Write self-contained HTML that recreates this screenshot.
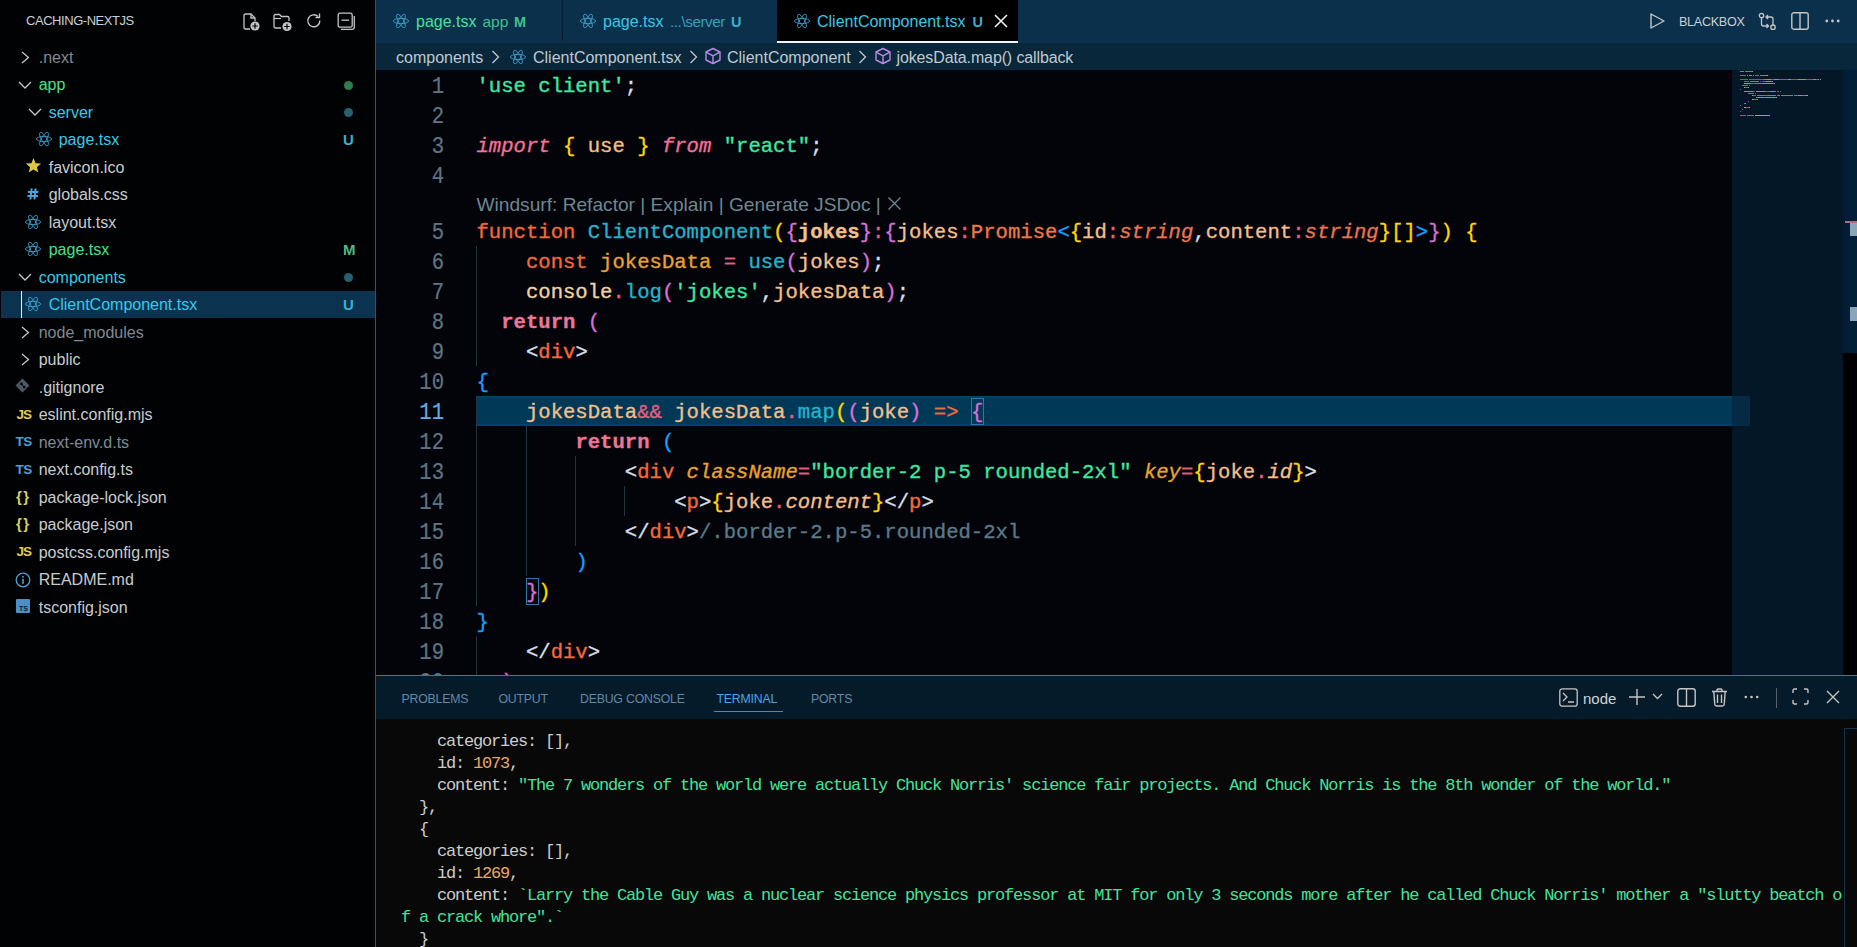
<!DOCTYPE html><html><head><meta charset="utf-8"><style>
*{margin:0;padding:0;box-sizing:border-box}
html,body{width:1857px;height:947px;overflow:hidden;background:#03030a;font-family:"Liberation Sans",sans-serif}
.abs{position:absolute}
.ic{position:absolute;overflow:visible}
.sl{position:absolute;height:27.5px;line-height:27.5px;font-size:16px;white-space:pre}
.gl{position:absolute;height:27.5px;line-height:27.5px;white-space:pre}
.tb{position:absolute;top:0;height:43px;line-height:44px;font-size:16px;white-space:pre}
.bc{position:absolute;top:44.3px;height:27px;line-height:27px;font-size:16px;white-space:pre}
.pt{position:absolute;top:676.8px;height:43px;line-height:44px;font-size:12.3px;letter-spacing:-0.2px;white-space:pre}
.cl{position:absolute;left:476.5px;height:30px;line-height:30px;font-family:"Liberation Mono",monospace;font-size:20.6px;white-space:pre;-webkit-text-stroke:0.35px currentColor}
.cl span{-webkit-text-stroke:0.35px}
.ln{position:absolute;left:391px;width:53px;transform:scaleY(1.14);transform-origin:0 21px;-webkit-text-stroke:0.2px currentColor;text-align:right;height:30px;line-height:30px;font-family:"Liberation Mono",monospace;font-size:20.6px}
.tl{position:absolute;left:401px;font-family:"Liberation Mono",monospace;font-size:17px;letter-spacing:-1.2px;line-height:22px;height:22px;white-space:pre;color:#cccccc}
</style></head><body><div class="abs" style="left:0;top:0;width:375px;height:947px;background:#010204"></div>
<div class="abs" style="left:375px;top:0;width:1px;height:947px;background:#4a4c50"></div>
<div class="abs" style="left:26px;top:0;height:43.75px;line-height:42px;font-size:13px;letter-spacing:-0.45px;color:#c9d1d9">CACHING-NEXTJS</div>
<div class="sl" style="left:38.7px;top:43.55px;color:#7f8a93">.next</div>
<svg class="ic" style="left:21px;top:50.5px" width="9" height="13" viewBox="0 0 9 13"><path d="M1 1 L7.5 6.5 L1 12" fill="none" stroke="#c8c8c8" stroke-width="1.3"/></svg>
<div class="sl" style="left:38.7px;top:71.05px;color:#48e08a">app</div>
<svg class="ic" style="left:18px;top:80.5px" width="14" height="8" viewBox="0 0 14 8"><path d="M1 1 L7 7 L13 1" fill="none" stroke="#c8c8c8" stroke-width="1.3"/></svg>
<div class="abs" style="left:344px;top:80.5px;width:9px;height:9px;border-radius:50%;background:#327a50"></div>
<div class="sl" style="left:48.7px;top:98.55px;color:#38c8e8">server</div>
<svg class="ic" style="left:28px;top:108.0px" width="14" height="8" viewBox="0 0 14 8"><path d="M1 1 L7 7 L13 1" fill="none" stroke="#c8c8c8" stroke-width="1.3"/></svg>
<div class="abs" style="left:344px;top:108.0px;width:9px;height:9px;border-radius:50%;background:#28606e"></div>
<div class="sl" style="left:58.7px;top:126.05px;color:#38c8e8">page.tsx</div>
<svg class="ic" style="left:36px;top:131.2px" width="16" height="16" viewBox="0 0 16 16"><g fill="none" stroke="#3fa2cf" stroke-width="0.85"><ellipse cx="8" cy="8" rx="7.6" ry="2.6"/><ellipse cx="8" cy="8" rx="7.6" ry="2.6" transform="rotate(60 8 8)"/><ellipse cx="8" cy="8" rx="7.6" ry="2.6" transform="rotate(120 8 8)"/></g></svg>
<div class="sl" style="left:343px;top:126.25px;color:#3aaed0;font-weight:bold;font-size:15px">U</div>
<div class="sl" style="left:48.7px;top:153.55px;color:#c8ccd0">favicon.ico</div>
<svg class="ic" style="left:25px;top:156.5px" width="17" height="17" viewBox="0 0 24 24"><path d="M12 1.5 L15 8.8 L22.8 9.3 L16.8 14.3 L18.8 22 L12 17.8 L5.2 22 L7.2 14.3 L1.2 9.3 L9 8.8 Z" fill="#dcc848"/></svg>
<div class="sl" style="left:48.7px;top:181.05px;color:#c8ccd0">globals.css</div>
<svg class="ic" style="left:27px;top:188.0px" width="12" height="12" viewBox="0 0 12 12"><path d="M4.6 0.5 L3.4 11.5 M8.6 0.5 L7.4 11.5 M0.8 3.9 H11.4 M0.4 8.1 H11" stroke="#4ea3d8" stroke-width="2"/></svg>
<div class="sl" style="left:48.7px;top:208.55px;color:#c8ccd0">layout.tsx</div>
<svg class="ic" style="left:25px;top:213.7px" width="16" height="16" viewBox="0 0 16 16"><g fill="none" stroke="#3fa2cf" stroke-width="0.85"><ellipse cx="8" cy="8" rx="7.6" ry="2.6"/><ellipse cx="8" cy="8" rx="7.6" ry="2.6" transform="rotate(60 8 8)"/><ellipse cx="8" cy="8" rx="7.6" ry="2.6" transform="rotate(120 8 8)"/></g></svg>
<div class="sl" style="left:48.7px;top:236.05px;color:#48e08a">page.tsx</div>
<svg class="ic" style="left:25px;top:241.2px" width="16" height="16" viewBox="0 0 16 16"><g fill="none" stroke="#3fa2cf" stroke-width="0.85"><ellipse cx="8" cy="8" rx="7.6" ry="2.6"/><ellipse cx="8" cy="8" rx="7.6" ry="2.6" transform="rotate(60 8 8)"/><ellipse cx="8" cy="8" rx="7.6" ry="2.6" transform="rotate(120 8 8)"/></g></svg>
<div class="sl" style="left:343px;top:236.25px;color:#4fb883;font-weight:bold;font-size:15px">M</div>
<div class="sl" style="left:38.7px;top:263.55px;color:#38c8e8">components</div>
<svg class="ic" style="left:18px;top:273.0px" width="14" height="8" viewBox="0 0 14 8"><path d="M1 1 L7 7 L13 1" fill="none" stroke="#c8c8c8" stroke-width="1.3"/></svg>
<div class="abs" style="left:344px;top:273.0px;width:9px;height:9px;border-radius:50%;background:#28606e"></div>
<div class="abs" style="left:1px;top:291.25px;width:374px;height:26.75px;background:#0b3350"></div>
<div class="abs" style="left:21px;top:291.25px;width:1.2px;height:26.75px;background:#e8eef2"></div>
<div class="sl" style="left:48.7px;top:291.05px;color:#38c8e8">ClientComponent.tsx</div>
<svg class="ic" style="left:25px;top:296.2px" width="16" height="16" viewBox="0 0 16 16"><g fill="none" stroke="#3fa2cf" stroke-width="0.85"><ellipse cx="8" cy="8" rx="7.6" ry="2.6"/><ellipse cx="8" cy="8" rx="7.6" ry="2.6" transform="rotate(60 8 8)"/><ellipse cx="8" cy="8" rx="7.6" ry="2.6" transform="rotate(120 8 8)"/></g></svg>
<div class="sl" style="left:343px;top:291.25px;color:#3aaed0;font-weight:bold;font-size:15px">U</div>
<div class="sl" style="left:38.7px;top:318.55px;color:#7f8a93">node_modules</div>
<svg class="ic" style="left:21px;top:325.5px" width="9" height="13" viewBox="0 0 9 13"><path d="M1 1 L7.5 6.5 L1 12" fill="none" stroke="#c8c8c8" stroke-width="1.3"/></svg>
<div class="sl" style="left:38.7px;top:346.05px;color:#c8ccd0">public</div>
<svg class="ic" style="left:21px;top:353.0px" width="9" height="13" viewBox="0 0 9 13"><path d="M1 1 L7.5 6.5 L1 12" fill="none" stroke="#c8c8c8" stroke-width="1.3"/></svg>
<div class="sl" style="left:38.7px;top:373.55px;color:#c8ccd0">.gitignore</div>
<svg class="ic" style="left:15px;top:378.0px" width="15" height="15" viewBox="0 0 14 14"><path d="M7 0.5 L13.5 7 L7 13.5 L0.5 7 Z" fill="#4d5862"/><circle cx="6" cy="5.5" r="1.2" fill="#000"/><circle cx="8.5" cy="8.5" r="1.2" fill="#000"/><path d="M6 5.5 L8.5 8.5" stroke="#000" stroke-width="0.9"/></svg>
<div class="sl" style="left:38.7px;top:401.05px;color:#c8ccd0">eslint.config.mjs</div>
<div class="gl" style="left:16.5px;top:400.75px;color:#e5cd52;font-weight:bold;font-size:13.5px;letter-spacing:-1px">JS</div>
<div class="sl" style="left:38.7px;top:428.55px;color:#7f8a93">next-env.d.ts</div>
<div class="gl" style="left:15.5px;top:428.25px;color:#4e9fd6;font-weight:bold;font-size:13.5px;letter-spacing:-0.6px">TS</div>
<div class="sl" style="left:38.7px;top:456.05px;color:#c8ccd0">next.config.ts</div>
<div class="gl" style="left:15.5px;top:455.75px;color:#4e9fd6;font-weight:bold;font-size:13.5px;letter-spacing:-0.6px">TS</div>
<div class="sl" style="left:38.7px;top:483.55px;color:#c8ccd0">package-lock.json</div>
<div class="gl" style="left:16px;top:482.75px;color:#d7d05a;font-weight:bold;font-size:15px;letter-spacing:1.5px">{}</div>
<div class="sl" style="left:38.7px;top:511.05px;color:#c8ccd0">package.json</div>
<div class="gl" style="left:16px;top:510.25px;color:#d7d05a;font-weight:bold;font-size:15px;letter-spacing:1.5px">{}</div>
<div class="sl" style="left:38.7px;top:538.55px;color:#c8ccd0">postcss.config.mjs</div>
<div class="gl" style="left:16.5px;top:538.25px;color:#e5cd52;font-weight:bold;font-size:13.5px;letter-spacing:-1px">JS</div>
<div class="sl" style="left:38.7px;top:566.05px;color:#c8ccd0">README.md</div>
<svg class="ic" style="left:15px;top:572.0px" width="16" height="16" viewBox="0 0 16 16"><circle cx="8" cy="8" r="6.8" fill="none" stroke="#4fa0d0" stroke-width="1.3"/><rect x="7.2" y="6.8" width="1.6" height="5" fill="#4fa0d0"/><rect x="7.2" y="4" width="1.6" height="1.6" fill="#4fa0d0"/></svg>
<div class="sl" style="left:38.7px;top:593.55px;color:#c8ccd0">tsconfig.json</div>
<svg class="ic" style="left:16px;top:598.5px" width="14" height="14" viewBox="0 0 14 14"><rect x="0" y="0" width="14" height="14" rx="1" fill="#4a90c8"/><text x="7.5" y="11.5" font-size="7" font-family="Liberation Sans" font-weight="bold" fill="#0a1a28" text-anchor="middle">TS</text></svg>
<svg class="ic" style="left:241px;top:12px" width="20" height="20" viewBox="0 0 20 20"><path d="M9 17 H4.5 Q3 17 3 15.5 V3.5 Q3 2 4.5 2 H10 L14 6 V9" fill="none" stroke="#c5c5c5" stroke-width="1.3"/><path d="M10 2 V6 H14" fill="none" stroke="#c5c5c5" stroke-width="1.3"/><circle cx="14" cy="14" r="4.6" fill="#c5c5c5"/><path d="M14 11.3 V16.7 M11.3 14 H16.7" stroke="#000" stroke-width="1.2"/></svg>
<svg class="ic" style="left:272px;top:12px" width="21" height="20" viewBox="0 0 21 20"><path d="M9 16 H3.5 Q2 16 2 14.5 V4 Q2 2.5 3.5 2.5 H7.5 L9.5 4.5 H15.5 Q17 4.5 17 6 V9" fill="none" stroke="#c5c5c5" stroke-width="1.3"/><path d="M2 6.5 H9" fill="none" stroke="#c5c5c5" stroke-width="1.2"/><circle cx="15" cy="14.5" r="4.6" fill="#c5c5c5"/><path d="M15 11.8 V17.2 M12.3 14.5 H17.7" stroke="#000" stroke-width="1.2"/></svg>
<svg class="ic" style="left:305px;top:12px" width="18" height="18" viewBox="0 0 18 18"><path d="M14.8 8.5 A6 6 0 1 1 13 4.5" fill="none" stroke="#c5c5c5" stroke-width="1.4"/><path d="M14.5 1.5 V5.5 H10.5" fill="none" stroke="#c5c5c5" stroke-width="1.4"/></svg>
<svg class="ic" style="left:337px;top:12px" width="19" height="19" viewBox="0 0 19 19"><rect x="1.2" y="1.2" width="14" height="14" rx="1.8" fill="none" stroke="#c5c5c5" stroke-width="1.3"/><path d="M4.5 8.2 H12" stroke="#c5c5c5" stroke-width="1.3"/><path d="M17.3 4 V15.5 Q17.3 17.3 15.5 17.3 H4" fill="none" stroke="#c5c5c5" stroke-width="1.3"/></svg>
<div class="abs" style="left:376px;top:0;width:1481px;height:43px;background:#0b304b"></div>
<div class="abs" style="left:562px;top:0;width:1px;height:41px;background:#061a2a"></div>
<div class="abs" style="left:777px;top:0;width:241px;height:43px;background:#000"></div>
<div class="abs" style="left:777px;top:41px;width:241px;height:2px;background:#f2f4f6"></div>
<svg class="ic" style="left:393px;top:13px" width="16" height="16" viewBox="0 0 16 16"><g fill="none" stroke="#3fa2cf" stroke-width="0.85"><ellipse cx="8" cy="8" rx="7.6" ry="2.6"/><ellipse cx="8" cy="8" rx="7.6" ry="2.6" transform="rotate(60 8 8)"/><ellipse cx="8" cy="8" rx="7.6" ry="2.6" transform="rotate(120 8 8)"/></g></svg>
<div class="tb" style="left:416px;color:#46e29a">page.tsx</div>
<div class="tb" style="left:482.5px;color:#40c090;font-size:15.5px">app</div>
<div class="tb" style="left:514px;color:#40c090;font-weight:bold;font-size:14.5px">M</div>
<svg class="ic" style="left:580px;top:13px" width="16" height="16" viewBox="0 0 16 16"><g fill="none" stroke="#3fa2cf" stroke-width="0.85"><ellipse cx="8" cy="8" rx="7.6" ry="2.6"/><ellipse cx="8" cy="8" rx="7.6" ry="2.6" transform="rotate(60 8 8)"/><ellipse cx="8" cy="8" rx="7.6" ry="2.6" transform="rotate(120 8 8)"/></g></svg>
<div class="tb" style="left:603px;color:#38c8e8">page.tsx</div>
<div class="tb" style="left:670px;color:#3a9fb8;font-size:15.3px;letter-spacing:-0.45px">...\server</div>
<div class="tb" style="left:731px;color:#3aaed0;font-weight:bold;font-size:14.5px">U</div>
<svg class="ic" style="left:794px;top:13px" width="16" height="16" viewBox="0 0 16 16"><g fill="none" stroke="#3fa2cf" stroke-width="0.85"><ellipse cx="8" cy="8" rx="7.6" ry="2.6"/><ellipse cx="8" cy="8" rx="7.6" ry="2.6" transform="rotate(60 8 8)"/><ellipse cx="8" cy="8" rx="7.6" ry="2.6" transform="rotate(120 8 8)"/></g></svg>
<div class="tb" style="left:817px;color:#38c8e8">ClientComponent.tsx</div>
<div class="tb" style="left:972.5px;color:#3aaed0;font-weight:bold;font-size:14.5px">U</div>
<svg class="ic" style="left:994px;top:14px" width="14" height="14" viewBox="0 0 14 14"><path d="M1 1 L13 13 M13 1 L1 13" stroke="#f0f0f0" stroke-width="1.6"/></svg>
<svg class="ic" style="left:1649px;top:12px" width="17" height="18" viewBox="0 0 17 18"><path d="M2 2 L15 9 L2 16 Z" fill="none" stroke="#c5c5c5" stroke-width="1.4" stroke-linejoin="round"/></svg>
<div class="tb" style="left:1679px;color:#c9d1d9;font-size:12.6px;letter-spacing:-0.3px">BLACKBOX</div>
<svg class="ic" style="left:1758px;top:12px" width="19" height="19" viewBox="0 0 19 19"><circle cx="3.5" cy="3.5" r="2.2" fill="none" stroke="#c5c5c5" stroke-width="1.3"/><circle cx="15" cy="15.2" r="2.2" fill="none" stroke="#c5c5c5" stroke-width="1.3"/><path d="M3.5 5.7 V12 Q3.5 14 5.5 14 H10.5 M8.5 12 L10.5 14 L8.5 16 M15 13 V7 Q15 5 13 5 H8 M10 3 L8 5 L10 7" fill="none" stroke="#c5c5c5" stroke-width="1.3"/></svg>
<svg class="ic" style="left:1791px;top:12px" width="18" height="18" viewBox="0 0 18 18"><rect x="0.8" y="0.8" width="16.4" height="16.4" rx="2" fill="none" stroke="#c5c5c5" stroke-width="1.4"/><path d="M9 1 V17" stroke="#c5c5c5" stroke-width="1.4"/></svg>
<svg class="ic" style="left:1825px;top:19px" width="15" height="4" viewBox="0 0 15 4"><circle cx="1.8" cy="2" r="1.4" fill="#c5c5c5"/><circle cx="7.5" cy="2" r="1.4" fill="#c5c5c5"/><circle cx="13.2" cy="2" r="1.4" fill="#c5c5c5"/></svg>
<div class="abs" style="left:376px;top:43px;width:1481px;height:27px;background:#08273a"></div>
<div class="bc" style="left:396px;color:#c0c8d0">components</div>
<svg class="ic" style="left:491px;top:50px" width="9" height="14" viewBox="0 0 9 14"><path d="M1.5 1 L7.5 7.0 L1.5 13" fill="none" stroke="#c0c8d0" stroke-width="1.3"/></svg>
<svg class="ic" style="left:510px;top:49px" width="16" height="16" viewBox="0 0 16 16"><g fill="none" stroke="#3fa2cf" stroke-width="0.85"><ellipse cx="8" cy="8" rx="7.6" ry="2.6"/><ellipse cx="8" cy="8" rx="7.6" ry="2.6" transform="rotate(60 8 8)"/><ellipse cx="8" cy="8" rx="7.6" ry="2.6" transform="rotate(120 8 8)"/></g></svg>
<div class="bc" style="left:533px;color:#c0c8d0">ClientComponent.tsx</div>
<svg class="ic" style="left:689px;top:50px" width="9" height="14" viewBox="0 0 9 14"><path d="M1.5 1 L7.5 7.0 L1.5 13" fill="none" stroke="#c0c8d0" stroke-width="1.3"/></svg>
<svg class="ic" style="left:704px;top:47px" width="18" height="18" viewBox="0 0 18 18"><g fill="none" stroke="#b88ae6" stroke-width="1.4" stroke-linejoin="round"><path d="M9 1.5 L16 5 L16 13 L9 16.5 L2 13 L2 5 Z"/><path d="M2.5 5.3 L9 8.8 L15.5 5.3 M9 8.8 L9 16"/></g></svg>
<div class="bc" style="left:727px;color:#c0c8d0">ClientComponent</div>
<svg class="ic" style="left:858px;top:50px" width="9" height="14" viewBox="0 0 9 14"><path d="M1.5 1 L7.5 7.0 L1.5 13" fill="none" stroke="#c0c8d0" stroke-width="1.3"/></svg>
<svg class="ic" style="left:874px;top:47px" width="18" height="18" viewBox="0 0 18 18"><g fill="none" stroke="#b88ae6" stroke-width="1.4" stroke-linejoin="round"><path d="M9 1.5 L16 5 L16 13 L9 16.5 L2 13 L2 5 Z"/><path d="M2.5 5.3 L9 8.8 L15.5 5.3 M9 8.8 L9 16"/></g></svg>
<div class="bc" style="left:896.5px;color:#c0c8d0;letter-spacing:-0.12px">jokesData.map() callback</div>
<div class="abs" style="left:476px;top:396px;width:1274px;height:30px;background:#003858;border-top:2px solid #00426a;border-bottom:2px solid #00426a"></div>
<div class="cl" style="top:72px"><span style="color:#3ee8a0">&#x27;use client&#x27;</span><span style="color:#d5dde6">;</span></div>
<div class="ln" style="top:72.6px;color:#5f7584">1</div>
<div class="cl" style="top:102px"></div>
<div class="ln" style="top:102.6px;color:#5f7584">2</div>
<div class="cl" style="top:132px"><span style="color:#f27196;font-style:italic">import</span><span style="color: "> </span><span style="color:#ffd700">{</span><span style="color:#f2bf8a"> use </span><span style="color:#ffd700">}</span><span style="color: "> </span><span style="color:#f27196;font-style:italic">from</span><span style="color: "> </span><span style="color:#3ee8a0">&quot;react&quot;</span><span style="color:#d5dde6">;</span></div>
<div class="ln" style="top:132.6px;color:#5f7584">3</div>
<div class="cl" style="top:162px"></div>
<div class="ln" style="top:162.6px;color:#5f7584">4</div>
<div class="cl" style="top:218px"><span style="color:#f5693a">function</span><span style="color: "> </span><span style="color:#24b4cc">ClientComponent</span><span style="color:#ffd700">(</span><span style="color:#da70d6">{</span><span style="color:#f2bf8a;font-weight:bold">jokes</span><span style="color:#da70d6">}</span><span style="color:#e2607e">:</span><span style="color:#da70d6">{</span><span style="color:#f2bf8a">jokes</span><span style="color:#e2607e">:</span><span style="color:#ee7a45">Promise</span><span style="color:#179fff">&lt;</span><span style="color:#ffd700">{</span><span style="color:#f2bf8a">id</span><span style="color:#e2607e">:</span><span style="color:#e8744e;font-style:italic">string</span><span style="color:#d5dde6">,</span><span style="color:#f2bf8a">content</span><span style="color:#e2607e">:</span><span style="color:#e8744e;font-style:italic">string</span><span style="color:#ffd700">}</span><span style="color:#ffd700">[]</span><span style="color:#179fff">&gt;</span><span style="color:#da70d6">}</span><span style="color:#ffd700">)</span><span style="color: "> </span><span style="color:#ffd700">{</span></div>
<div class="ln" style="top:218.6px;color:#5f7584">5</div>
<div class="cl" style="top:248px"><span style="color: ">    </span><span style="color:#f5693a">const</span><span style="color: "> </span><span style="color:#e9a233">jokesData</span><span style="color: "> </span><span style="color:#e2607e">=</span><span style="color: "> </span><span style="color:#24b4cc">use</span><span style="color:#da70d6">(</span><span style="color:#f2bf8a">jokes</span><span style="color:#da70d6">)</span><span style="color:#d5dde6">;</span></div>
<div class="ln" style="top:248.6px;color:#5f7584">6</div>
<div class="cl" style="top:278px"><span style="color: ">    </span><span style="color:#f2d2a2">console</span><span style="color:#e2607e">.</span><span style="color:#24b4cc">log</span><span style="color:#da70d6">(</span><span style="color:#3ee8a0">&#x27;jokes&#x27;</span><span style="color:#d5dde6">,</span><span style="color:#f2bf8a">jokesData</span><span style="color:#da70d6">)</span><span style="color:#d5dde6">;</span></div>
<div class="ln" style="top:278.6px;color:#5f7584">7</div>
<div class="cl" style="top:308px"><span style="color: ">  </span><span style="color:#ec7595;font-weight:bold">return</span><span style="color: "> </span><span style="color:#da70d6">(</span></div>
<div class="ln" style="top:308.6px;color:#5f7584">8</div>
<div class="cl" style="top:338px"><span style="color: ">    </span><span style="color:#d8dfe6">&lt;</span><span style="color:#f5693a">div</span><span style="color:#d8dfe6">&gt;</span></div>
<div class="ln" style="top:338.6px;color:#5f7584">9</div>
<div class="cl" style="top:368px"><span style="color:#179fff">{</span></div>
<div class="ln" style="top:368.6px;color:#5f7584">10</div>
<div class="cl" style="top:398px"><span style="color: ">    </span><span style="color:#f2bf8a">jokesData</span><span style="color:#e2607e">&amp;&amp;</span><span style="color: "> </span><span style="color:#f2bf8a">jokesData</span><span style="color:#e2607e">.</span><span style="color:#24b4cc">map</span><span style="color:#ffd700">(</span><span style="color:#da70d6">(</span><span style="color:#f2bf8a">joke</span><span style="color:#da70d6">)</span><span style="color: "> </span><span style="color:#f5693a">=&gt;</span><span style="color: "> </span><span style="color:#da70d6">{</span></div>
<div class="ln" style="top:398.6px;color:#5aaee6">11</div>
<div class="cl" style="top:428px"><span style="color: ">        </span><span style="color:#ec7595;font-weight:bold">return</span><span style="color: "> </span><span style="color:#179fff">(</span></div>
<div class="ln" style="top:428.6px;color:#5f7584">12</div>
<div class="cl" style="top:458px"><span style="color: ">            </span><span style="color:#d8dfe6">&lt;</span><span style="color:#f5693a">div</span><span style="color: "> </span><span style="color:#e9a22f;font-style:italic">className</span><span style="color:#e2607e">=</span><span style="color:#3ee8a0">&quot;border-2 p-5 rounded-2xl&quot;</span><span style="color: "> </span><span style="color:#e9a22f;font-style:italic">key</span><span style="color:#e2607e">=</span><span style="color:#ffd700">{</span><span style="color:#f2bf8a">joke</span><span style="color:#e2607e">.</span><span style="color:#f2bf8a;font-style:italic">id</span><span style="color:#ffd700">}</span><span style="color:#d8dfe6">&gt;</span></div>
<div class="ln" style="top:458.6px;color:#5f7584">13</div>
<div class="cl" style="top:488px"><span style="color: ">                </span><span style="color:#d8dfe6">&lt;</span><span style="color:#f5693a">p</span><span style="color:#d8dfe6">&gt;</span><span style="color:#ffd700">{</span><span style="color:#f2bf8a">joke</span><span style="color:#e2607e">.</span><span style="color:#f2bf8a;font-style:italic">content</span><span style="color:#ffd700">}</span><span style="color:#d8dfe6">&lt;/</span><span style="color:#f5693a">p</span><span style="color:#d8dfe6">&gt;</span></div>
<div class="ln" style="top:488.6px;color:#5f7584">14</div>
<div class="cl" style="top:518px"><span style="color: ">            </span><span style="color:#d8dfe6">&lt;/</span><span style="color:#f5693a">div</span><span style="color:#d8dfe6">&gt;</span><span style="color:#5b7a88">/.border-2.p-5.rounded-2xl</span></div>
<div class="ln" style="top:518.6px;color:#5f7584">15</div>
<div class="cl" style="top:548px"><span style="color: ">        </span><span style="color:#179fff">)</span></div>
<div class="ln" style="top:548.6px;color:#5f7584">16</div>
<div class="cl" style="top:578px"><span style="color: ">    </span><span style="color:#da70d6">}</span><span style="color:#ffd700">)</span></div>
<div class="ln" style="top:578.6px;color:#5f7584">17</div>
<div class="cl" style="top:608px"><span style="color:#179fff">}</span></div>
<div class="ln" style="top:608.6px;color:#5f7584">18</div>
<div class="cl" style="top:638px"><span style="color: ">    </span><span style="color:#d8dfe6">&lt;/</span><span style="color:#f5693a">div</span><span style="color:#d8dfe6">&gt;</span></div>
<div class="ln" style="top:638.6px;color:#5f7584">19</div>
<div class="cl" style="top:668px"><span style="color: ">  </span><span style="color:#da70d6">)</span></div>
<div class="ln" style="top:668.6px;color:#5f7584">20</div>
<div class="abs" style="left:476.5px;top:191.5px;height:26px;line-height:26px;font-size:19.15px;color:#6f8791;white-space:pre">Windsurf: Refactor | Explain | Generate JSDoc |</div>
<svg class="ic" style="left:887px;top:196px" width="15" height="15" viewBox="0 0 15 15"><path d="M1.5 1.5 L13.5 13.5 M13.5 1.5 L1.5 13.5" stroke="#6f8791" stroke-width="1.3"/></svg>
<div class="abs" style="left:476px;top:246px;width:1px;height:120px;background:#1d3443"></div>
<div class="abs" style="left:476px;top:396px;width:1px;height:210px;background:#1d3443"></div>
<div class="abs" style="left:476px;top:636px;width:1px;height:39px;background:#1d3443"></div>
<div class="abs" style="left:526px;top:426px;width:1px;height:150px;background:#1d3443"></div>
<div class="abs" style="left:575px;top:456px;width:1px;height:90px;background:#1d3443"></div>
<div class="abs" style="left:624px;top:486px;width:1px;height:30px;background:#1d3443"></div>
<div class="abs" style="left:970.8px;top:398px;width:13.4px;height:27px;border:1px solid #2f77a5"></div>
<div class="abs" style="left:525.5px;top:578px;width:13.4px;height:27px;border:1px solid #2f77a5"></div>
<div class="abs" style="left:1732px;top:70px;width:111px;height:605px;background:#031726"></div>
<div class="abs" style="left:1740px;top:70.6px;width:4px;height:1.3px;background:#3ee8a0;opacity:0.7"></div>
<div class="abs" style="left:1745px;top:70.6px;width:7px;height:1.3px;background:#3ee8a0;opacity:0.7"></div>
<div class="abs" style="left:1752px;top:70.6px;width:1px;height:1.3px;background:#d5dde6;opacity:0.7"></div>
<div class="abs" style="left:1740px;top:74.6px;width:6px;height:1.3px;background:#f27196;opacity:0.7"></div>
<div class="abs" style="left:1747px;top:74.6px;width:1px;height:1.3px;background:#ffd700;opacity:0.7"></div>
<div class="abs" style="left:1749px;top:74.6px;width:3px;height:1.3px;background:#f2bf8a;opacity:0.7"></div>
<div class="abs" style="left:1753px;top:74.6px;width:1px;height:1.3px;background:#ffd700;opacity:0.7"></div>
<div class="abs" style="left:1755px;top:74.6px;width:4px;height:1.3px;background:#f27196;opacity:0.7"></div>
<div class="abs" style="left:1760px;top:74.6px;width:7px;height:1.3px;background:#3ee8a0;opacity:0.7"></div>
<div class="abs" style="left:1767px;top:74.6px;width:1px;height:1.3px;background:#d5dde6;opacity:0.7"></div>
<div class="abs" style="left:1740px;top:78.6px;width:8px;height:1.3px;background:#f5693a;opacity:0.7"></div>
<div class="abs" style="left:1749px;top:78.6px;width:15px;height:1.3px;background:#24b4cc;opacity:0.7"></div>
<div class="abs" style="left:1764px;top:78.6px;width:1px;height:1.3px;background:#ffd700;opacity:0.7"></div>
<div class="abs" style="left:1765px;top:78.6px;width:1px;height:1.3px;background:#da70d6;opacity:0.7"></div>
<div class="abs" style="left:1766px;top:78.6px;width:5px;height:1.3px;background:#f2bf8a;opacity:0.7"></div>
<div class="abs" style="left:1771px;top:78.6px;width:1px;height:1.3px;background:#da70d6;opacity:0.7"></div>
<div class="abs" style="left:1772px;top:78.6px;width:1px;height:1.3px;background:#e2607e;opacity:0.7"></div>
<div class="abs" style="left:1773px;top:78.6px;width:1px;height:1.3px;background:#da70d6;opacity:0.7"></div>
<div class="abs" style="left:1774px;top:78.6px;width:5px;height:1.3px;background:#f2bf8a;opacity:0.7"></div>
<div class="abs" style="left:1779px;top:78.6px;width:1px;height:1.3px;background:#e2607e;opacity:0.7"></div>
<div class="abs" style="left:1780px;top:78.6px;width:7px;height:1.3px;background:#ee7a45;opacity:0.7"></div>
<div class="abs" style="left:1787px;top:78.6px;width:1px;height:1.3px;background:#179fff;opacity:0.7"></div>
<div class="abs" style="left:1788px;top:78.6px;width:1px;height:1.3px;background:#ffd700;opacity:0.7"></div>
<div class="abs" style="left:1789px;top:78.6px;width:2px;height:1.3px;background:#f2bf8a;opacity:0.7"></div>
<div class="abs" style="left:1791px;top:78.6px;width:1px;height:1.3px;background:#e2607e;opacity:0.7"></div>
<div class="abs" style="left:1792px;top:78.6px;width:6px;height:1.3px;background:#e8744e;opacity:0.7"></div>
<div class="abs" style="left:1798px;top:78.6px;width:1px;height:1.3px;background:#d5dde6;opacity:0.7"></div>
<div class="abs" style="left:1799px;top:78.6px;width:7px;height:1.3px;background:#f2bf8a;opacity:0.7"></div>
<div class="abs" style="left:1806px;top:78.6px;width:1px;height:1.3px;background:#e2607e;opacity:0.7"></div>
<div class="abs" style="left:1807px;top:78.6px;width:6px;height:1.3px;background:#e8744e;opacity:0.7"></div>
<div class="abs" style="left:1813px;top:78.6px;width:1px;height:1.3px;background:#ffd700;opacity:0.7"></div>
<div class="abs" style="left:1814px;top:78.6px;width:2px;height:1.3px;background:#ffd700;opacity:0.7"></div>
<div class="abs" style="left:1816px;top:78.6px;width:1px;height:1.3px;background:#179fff;opacity:0.7"></div>
<div class="abs" style="left:1817px;top:78.6px;width:1px;height:1.3px;background:#da70d6;opacity:0.7"></div>
<div class="abs" style="left:1818px;top:78.6px;width:1px;height:1.3px;background:#ffd700;opacity:0.7"></div>
<div class="abs" style="left:1820px;top:78.6px;width:1px;height:1.3px;background:#ffd700;opacity:0.7"></div>
<div class="abs" style="left:1744px;top:80.6px;width:5px;height:1.3px;background:#f5693a;opacity:0.7"></div>
<div class="abs" style="left:1750px;top:80.6px;width:9px;height:1.3px;background:#e9a233;opacity:0.7"></div>
<div class="abs" style="left:1760px;top:80.6px;width:1px;height:1.3px;background:#e2607e;opacity:0.7"></div>
<div class="abs" style="left:1762px;top:80.6px;width:3px;height:1.3px;background:#24b4cc;opacity:0.7"></div>
<div class="abs" style="left:1765px;top:80.6px;width:1px;height:1.3px;background:#da70d6;opacity:0.7"></div>
<div class="abs" style="left:1766px;top:80.6px;width:5px;height:1.3px;background:#f2bf8a;opacity:0.7"></div>
<div class="abs" style="left:1771px;top:80.6px;width:1px;height:1.3px;background:#da70d6;opacity:0.7"></div>
<div class="abs" style="left:1772px;top:80.6px;width:1px;height:1.3px;background:#d5dde6;opacity:0.7"></div>
<div class="abs" style="left:1744px;top:82.6px;width:7px;height:1.3px;background:#f2d2a2;opacity:0.7"></div>
<div class="abs" style="left:1751px;top:82.6px;width:1px;height:1.3px;background:#e2607e;opacity:0.7"></div>
<div class="abs" style="left:1752px;top:82.6px;width:3px;height:1.3px;background:#24b4cc;opacity:0.7"></div>
<div class="abs" style="left:1755px;top:82.6px;width:1px;height:1.3px;background:#da70d6;opacity:0.7"></div>
<div class="abs" style="left:1756px;top:82.6px;width:7px;height:1.3px;background:#3ee8a0;opacity:0.7"></div>
<div class="abs" style="left:1763px;top:82.6px;width:1px;height:1.3px;background:#d5dde6;opacity:0.7"></div>
<div class="abs" style="left:1764px;top:82.6px;width:9px;height:1.3px;background:#f2bf8a;opacity:0.7"></div>
<div class="abs" style="left:1773px;top:82.6px;width:1px;height:1.3px;background:#da70d6;opacity:0.7"></div>
<div class="abs" style="left:1774px;top:82.6px;width:1px;height:1.3px;background:#d5dde6;opacity:0.7"></div>
<div class="abs" style="left:1742px;top:84.6px;width:6px;height:1.3px;background:#ec7595;opacity:0.7"></div>
<div class="abs" style="left:1749px;top:84.6px;width:1px;height:1.3px;background:#da70d6;opacity:0.7"></div>
<div class="abs" style="left:1744px;top:86.6px;width:1px;height:1.3px;background:#d8dfe6;opacity:0.7"></div>
<div class="abs" style="left:1745px;top:86.6px;width:3px;height:1.3px;background:#f5693a;opacity:0.7"></div>
<div class="abs" style="left:1748px;top:86.6px;width:1px;height:1.3px;background:#d8dfe6;opacity:0.7"></div>
<div class="abs" style="left:1740px;top:88.6px;width:1px;height:1.3px;background:#179fff;opacity:0.7"></div>
<div class="abs" style="left:1744px;top:90.6px;width:9px;height:1.3px;background:#f2bf8a;opacity:0.7"></div>
<div class="abs" style="left:1753px;top:90.6px;width:2px;height:1.3px;background:#e2607e;opacity:0.7"></div>
<div class="abs" style="left:1756px;top:90.6px;width:9px;height:1.3px;background:#f2bf8a;opacity:0.7"></div>
<div class="abs" style="left:1765px;top:90.6px;width:1px;height:1.3px;background:#e2607e;opacity:0.7"></div>
<div class="abs" style="left:1766px;top:90.6px;width:3px;height:1.3px;background:#24b4cc;opacity:0.7"></div>
<div class="abs" style="left:1769px;top:90.6px;width:1px;height:1.3px;background:#ffd700;opacity:0.7"></div>
<div class="abs" style="left:1770px;top:90.6px;width:1px;height:1.3px;background:#da70d6;opacity:0.7"></div>
<div class="abs" style="left:1771px;top:90.6px;width:4px;height:1.3px;background:#f2bf8a;opacity:0.7"></div>
<div class="abs" style="left:1775px;top:90.6px;width:1px;height:1.3px;background:#da70d6;opacity:0.7"></div>
<div class="abs" style="left:1777px;top:90.6px;width:2px;height:1.3px;background:#f5693a;opacity:0.7"></div>
<div class="abs" style="left:1780px;top:90.6px;width:1px;height:1.3px;background:#da70d6;opacity:0.7"></div>
<div class="abs" style="left:1748px;top:92.6px;width:6px;height:1.3px;background:#ec7595;opacity:0.7"></div>
<div class="abs" style="left:1755px;top:92.6px;width:1px;height:1.3px;background:#179fff;opacity:0.7"></div>
<div class="abs" style="left:1752px;top:94.6px;width:1px;height:1.3px;background:#d8dfe6;opacity:0.7"></div>
<div class="abs" style="left:1753px;top:94.6px;width:3px;height:1.3px;background:#f5693a;opacity:0.7"></div>
<div class="abs" style="left:1757px;top:94.6px;width:9px;height:1.3px;background:#e9a22f;opacity:0.7"></div>
<div class="abs" style="left:1766px;top:94.6px;width:1px;height:1.3px;background:#e2607e;opacity:0.7"></div>
<div class="abs" style="left:1767px;top:94.6px;width:9px;height:1.3px;background:#3ee8a0;opacity:0.7"></div>
<div class="abs" style="left:1777px;top:94.6px;width:3px;height:1.3px;background:#3ee8a0;opacity:0.7"></div>
<div class="abs" style="left:1781px;top:94.6px;width:12px;height:1.3px;background:#3ee8a0;opacity:0.7"></div>
<div class="abs" style="left:1794px;top:94.6px;width:3px;height:1.3px;background:#e9a22f;opacity:0.7"></div>
<div class="abs" style="left:1797px;top:94.6px;width:1px;height:1.3px;background:#e2607e;opacity:0.7"></div>
<div class="abs" style="left:1798px;top:94.6px;width:1px;height:1.3px;background:#ffd700;opacity:0.7"></div>
<div class="abs" style="left:1799px;top:94.6px;width:4px;height:1.3px;background:#f2bf8a;opacity:0.7"></div>
<div class="abs" style="left:1803px;top:94.6px;width:1px;height:1.3px;background:#e2607e;opacity:0.7"></div>
<div class="abs" style="left:1804px;top:94.6px;width:2px;height:1.3px;background:#f2bf8a;opacity:0.7"></div>
<div class="abs" style="left:1806px;top:94.6px;width:1px;height:1.3px;background:#ffd700;opacity:0.7"></div>
<div class="abs" style="left:1807px;top:94.6px;width:1px;height:1.3px;background:#d8dfe6;opacity:0.7"></div>
<div class="abs" style="left:1756px;top:96.6px;width:1px;height:1.3px;background:#d8dfe6;opacity:0.7"></div>
<div class="abs" style="left:1757px;top:96.6px;width:1px;height:1.3px;background:#f5693a;opacity:0.7"></div>
<div class="abs" style="left:1758px;top:96.6px;width:1px;height:1.3px;background:#d8dfe6;opacity:0.7"></div>
<div class="abs" style="left:1759px;top:96.6px;width:1px;height:1.3px;background:#ffd700;opacity:0.7"></div>
<div class="abs" style="left:1760px;top:96.6px;width:4px;height:1.3px;background:#f2bf8a;opacity:0.7"></div>
<div class="abs" style="left:1764px;top:96.6px;width:1px;height:1.3px;background:#e2607e;opacity:0.7"></div>
<div class="abs" style="left:1765px;top:96.6px;width:7px;height:1.3px;background:#f2bf8a;opacity:0.7"></div>
<div class="abs" style="left:1772px;top:96.6px;width:1px;height:1.3px;background:#ffd700;opacity:0.7"></div>
<div class="abs" style="left:1773px;top:96.6px;width:2px;height:1.3px;background:#d8dfe6;opacity:0.7"></div>
<div class="abs" style="left:1775px;top:96.6px;width:1px;height:1.3px;background:#f5693a;opacity:0.7"></div>
<div class="abs" style="left:1776px;top:96.6px;width:1px;height:1.3px;background:#d8dfe6;opacity:0.7"></div>
<div class="abs" style="left:1752px;top:98.6px;width:2px;height:1.3px;background:#d8dfe6;opacity:0.7"></div>
<div class="abs" style="left:1754px;top:98.6px;width:3px;height:1.3px;background:#f5693a;opacity:0.7"></div>
<div class="abs" style="left:1757px;top:98.6px;width:1px;height:1.3px;background:#d8dfe6;opacity:0.7"></div>
<div class="abs" style="left:1748px;top:100.6px;width:1px;height:1.3px;background:#179fff;opacity:0.7"></div>
<div class="abs" style="left:1744px;top:102.6px;width:1px;height:1.3px;background:#da70d6;opacity:0.7"></div>
<div class="abs" style="left:1745px;top:102.6px;width:1px;height:1.3px;background:#ffd700;opacity:0.7"></div>
<div class="abs" style="left:1740px;top:104.6px;width:1px;height:1.3px;background:#179fff;opacity:0.7"></div>
<div class="abs" style="left:1744px;top:106.6px;width:2px;height:1.3px;background:#d8dfe6;opacity:0.7"></div>
<div class="abs" style="left:1746px;top:106.6px;width:3px;height:1.3px;background:#f5693a;opacity:0.7"></div>
<div class="abs" style="left:1749px;top:106.6px;width:1px;height:1.3px;background:#d8dfe6;opacity:0.7"></div>
<div class="abs" style="left:1742px;top:108.6px;width:1px;height:1.3px;background:#da70d6;opacity:0.7"></div>
<div class="abs" style="left:1740px;top:110.6px;width:1px;height:1.3px;background:#179fff;opacity:0.7"></div>
<div class="abs" style="left:1740px;top:114.6px;width:6px;height:1.3px;background:#f27196;opacity:0.7"></div>
<div class="abs" style="left:1747px;top:114.6px;width:7px;height:1.3px;background:#f27196;opacity:0.7"></div>
<div class="abs" style="left:1755px;top:114.6px;width:15px;height:1.3px;background:#f2d2a2;opacity:0.7"></div>
<div class="abs" style="left:1732px;top:396px;width:18px;height:30px;background:#052b44"></div>
<div class="abs" style="left:1843px;top:70px;width:14px;height:283px;background:#021d38"></div>
<div class="abs" style="left:1843px;top:353px;width:14px;height:322px;background:#000"></div>
<div class="abs" style="left:1845px;top:221px;width:12px;height:2px;background:#b06a7a"></div>
<div class="abs" style="left:1850px;top:223px;width:7px;height:13px;background:#8aa4b8"></div>
<div class="abs" style="left:1850px;top:307px;width:7px;height:14px;background:#8aa4b8"></div>
<div class="abs" style="left:376px;top:675px;width:1481px;height:1px;background:#1f80c6"></div>
<div class="abs" style="left:376px;top:676px;width:1481px;height:43px;background:#061b29"></div>
<div class="abs" style="left:376px;top:719px;width:1481px;height:228px;background:#080808"></div>
<div class="pt" style="left:401.5px;color:#6289a8">PROBLEMS</div>
<div class="pt" style="left:498.5px;color:#6289a8">OUTPUT</div>
<div class="pt" style="left:580px;color:#6289a8">DEBUG CONSOLE</div>
<div class="pt" style="left:716.5px;color:#4aa6e6">TERMINAL</div>
<div class="pt" style="left:811px;color:#6289a8">PORTS</div>
<div class="abs" style="left:714px;top:710.5px;width:68.5px;height:1.5px;background:#2f8fd8"></div>
<svg class="ic" style="left:1559px;top:688px" width="19" height="19" viewBox="0 0 19 19"><rect x="0.8" y="0.8" width="17.4" height="17.4" rx="2.5" fill="none" stroke="#c5c5c5" stroke-width="1.3"/><path d="M4 5 L8 9 L4 13 M9 14 H15" fill="none" stroke="#c5c5c5" stroke-width="1.3"/></svg>
<div class="abs" style="left:1583px;top:676px;height:43px;line-height:45px;font-size:15px;color:#d0d4d8">node</div>
<svg class="ic" style="left:1628px;top:688px" width="18" height="18" viewBox="0 0 18 18"><path d="M9 1 V17 M1 9 H17" stroke="#c5c5c5" stroke-width="1.4"/></svg>
<svg class="ic" style="left:1652px;top:693px" width="11" height="7" viewBox="0 0 11 7"><path d="M1 1 L5.5 5.5 L10 1" fill="none" stroke="#c5c5c5" stroke-width="1.3"/></svg>
<svg class="ic" style="left:1677px;top:688px" width="19" height="19" viewBox="0 0 19 19"><rect x="0.8" y="0.8" width="17.4" height="17.4" rx="2.5" fill="none" stroke="#c5c5c5" stroke-width="1.4"/><path d="M9.5 1 V18" stroke="#c5c5c5" stroke-width="1.4"/></svg>
<svg class="ic" style="left:1711px;top:688px" width="17" height="19" viewBox="0 0 17 19"><path d="M1 3.5 H16 M6 3.5 V2 Q6 1 7 1 H10 Q11 1 11 2 V3.5 M2.8 3.5 L3.8 16.5 Q4 18 5.5 18 H11.5 Q13 18 13.2 16.5 L14.2 3.5 M6.5 6.5 V15 M10.5 6.5 V15" fill="none" stroke="#c5c5c5" stroke-width="1.4"/></svg>
<svg class="ic" style="left:1744px;top:695px" width="15" height="4" viewBox="0 0 15 4"><circle cx="1.8" cy="2" r="1.3" fill="#c5c5c5"/><circle cx="7.5" cy="2" r="1.3" fill="#c5c5c5"/><circle cx="13.2" cy="2" r="1.3" fill="#c5c5c5"/></svg>
<div class="abs" style="left:1776px;top:688px;width:1px;height:20px;background:#5a6068"></div>
<svg class="ic" style="left:1792px;top:688px" width="17" height="17" viewBox="0 0 17 17"><path d="M1 5 V2.5 Q1 1 2.5 1 H5 M12 1 H14.5 Q16 1 16 2.5 V5 M16 12 V14.5 Q16 16 14.5 16 H12 M5 16 H2.5 Q1 16 1 14.5 V12" fill="none" stroke="#c5c5c5" stroke-width="1.4"/></svg>
<svg class="ic" style="left:1826px;top:690px" width="14" height="14" viewBox="0 0 14 14"><path d="M1 1 L13 13 M13 1 L1 13" stroke="#c5c5c5" stroke-width="1.4"/></svg>
<div class="tl" style="top:731px"><span style="color:#cccccc">    categories: [],</span></div>
<div class="tl" style="top:753px"><span style="color:#cccccc">    id: </span><span style="color:#e9a86a">1073</span><span style="color:#cccccc">,</span></div>
<div class="tl" style="top:775px"><span style="color:#cccccc">    content: </span><span style="color:#44e39c">&quot;The 7 wonders of the world were actually Chuck Norris&#x27; science fair projects. And Chuck Norris is the 8th wonder of the world.&quot;</span></div>
<div class="tl" style="top:797px"><span style="color:#cccccc">  },</span></div>
<div class="tl" style="top:819px"><span style="color:#cccccc">  {</span></div>
<div class="tl" style="top:841px"><span style="color:#cccccc">    categories: [],</span></div>
<div class="tl" style="top:863px"><span style="color:#cccccc">    id: </span><span style="color:#e9a86a">1269</span><span style="color:#cccccc">,</span></div>
<div class="tl" style="top:885px"><span style="color:#cccccc">    content: </span><span style="color:#44e39c">`Larry the Cable Guy was a nuclear science physics professor at MIT for only 3 seconds more after he called Chuck Norris&#x27; mother a &quot;slutty beatch o</span></div>
<div class="tl" style="top:907px"><span style="color:#44e39c">f a crack whore&quot;.`</span></div>
<div class="tl" style="top:929px"><span style="color:#cccccc">  }</span></div>
<div class="abs" style="left:1844px;top:728px;width:14px;height:220px;border-left:1px solid #10324c;border-top:1px solid #10324c"></div></body></html>
